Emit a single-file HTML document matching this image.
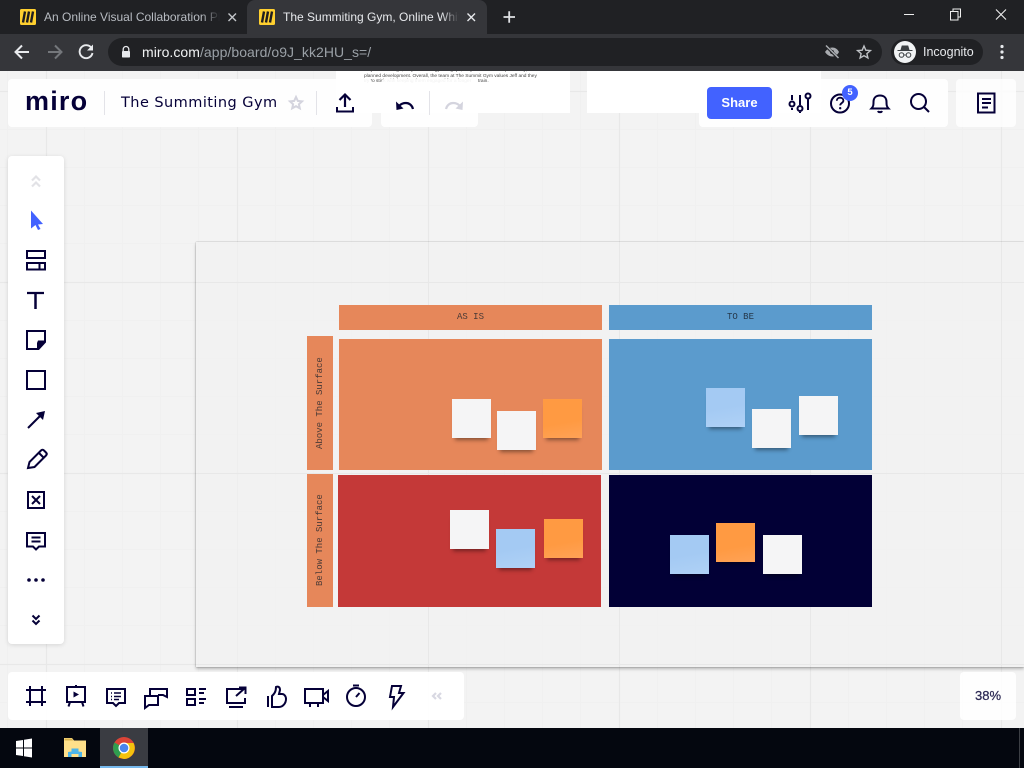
<!DOCTYPE html>
<html><head><meta charset="utf-8"><style>
html,body{margin:0;padding:0;width:1024px;height:768px;overflow:hidden;background:#f3f3f3;font-family:"Liberation Sans",sans-serif}
div,span,svg{position:absolute}
.p{background:rgba(255,255,255,.92);border-radius:4px}
.s{width:39px;height:39px;box-shadow:0 5px 4px -3px rgba(0,0,0,.42)}
.w{background:#f5f5f6}.o{background:linear-gradient(170deg,#ff9a42 60%,#ffa256)}.b{background:linear-gradient(170deg,#a4caf3 50%,#afd1f6)}
.m{font-family:"Liberation Mono",monospace;font-size:9px;color:#4a3a36;white-space:nowrap}
.v{writing-mode:vertical-rl;transform:rotate(180deg);text-align:center;line-height:26px}
.t{font-size:12px;line-height:16px;white-space:nowrap;overflow:hidden}
svg.i{overflow:visible;fill:none;stroke:#050038;stroke-width:2}
</style></head><body>

<!-- canvas grid -->
<svg style="left:0;top:71px" width="1024" height="657">
<g stroke="#f0f0f0" stroke-width="1">
<path d="M7.5 0V657M84.5 0V657M122.5 0V657M160.500 0V657M198.500 0V657M275.500 0V657M313.500 0V657M351.500 0V657M389.500 0V657M466.500 0V657M504.500 0V657M542.500 0V657M580.500 0V657M657.500 0V657M695.500 0V657M733.500 0V657M771.500 0V657M848.500 0V657M886.500 0V657M924.500 0V657M962.500 0V657"/>
<path d="M0 58.500H1024M0 96.500H1024M0 134.500H1024M0 172.500H1024M0 249.500H1024M0 287.500H1024M0 325.500H1024M0 363.500H1024M0 440.500H1024M0 478.500H1024M0 516.500H1024M0 554.500H1024M0 631.500H1024"/>
</g>
<g stroke="#e8e8e8" stroke-width="1.200">
<path d="M46.500 0V657M237.500 0V657M428.500 0V657M619.500 0V657M810.500 0V657M1001.500 0V657M0 20.500H1024M0 211.500H1024M0 402.500H1024M0 593.500H1024"/>
</g>
</svg>

<!-- frame -->
<div style="left:196px;top:242px;width:828px;height:425px;box-shadow:0 2px 3px rgba(0,0,0,.25),0 0 1px rgba(0,0,0,.4);background:rgba(242,242,242,.6)"></div>
<svg style="left:196px;top:242px" width="828" height="425"><g stroke="#e8e8e8"><path d="M232.500 0V425M423.500 0V425M614.500 0V425M805.500 0V425M0 40.500H828M0 231.500H828M0 422.500H828"/></g></svg>

<div style="left:339px;top:305px;width:263px;height:25px;background:#e6875a"></div>
<div style="left:609px;top:305px;width:263px;height:25px;background:#5b9bcd"></div>
<div class="m" style="left:339px;top:311px;width:263px;text-align:center;line-height:12px">AS IS</div>
<div class="m" style="left:609px;top:311px;width:263px;text-align:center;line-height:12px;color:#25394c">TO BE</div>
<div style="left:307px;top:336px;width:26px;height:134px;background:#e6875a"></div>
<div style="left:307px;top:474px;width:26px;height:133px;background:#e6875a"></div>
<div class="m v" style="left:307px;top:336px;width:26px;height:134px">Above The Surface</div>
<div class="m v" style="left:307px;top:474px;width:26px;height:133px">Below The Surface</div>
<div style="left:339px;top:339px;width:263px;height:131px;background:#e6875a"></div>
<div style="left:609px;top:339px;width:263px;height:131px;background:#5b9bcd"></div>
<div style="left:338px;top:475px;width:263px;height:131.5px;background:#c43938"></div>
<div style="left:609px;top:475px;width:263px;height:131.5px;background:#020036"></div>

<div class="s w" style="left:451.5px;top:399px"></div>
<div class="s w" style="left:497px;top:411px"></div>
<div class="s o" style="left:543px;top:398.5px"></div>
<div class="s w" style="left:450px;top:510px"></div>
<div class="s b" style="left:496px;top:529px"></div>
<div class="s o" style="left:544px;top:519px"></div>
<div class="s b" style="left:706px;top:388px"></div>
<div class="s w" style="left:752px;top:409px"></div>
<div class="s w" style="left:798.5px;top:395.5px"></div>
<div class="s b" style="left:670px;top:535px"></div>
<div class="s o" style="left:716px;top:523px"></div>
<div class="s w" style="left:762.5px;top:535px"></div>

<!-- white blocks under chrome -->
<div style="left:336px;top:71px;width:234px;height:42px;background:#fff;overflow:hidden">
<div style="left:28px;top:-3px;width:190px;font-size:4.8px;line-height:5.6px;color:#444;white-space:nowrap">they build change, they learn the gym at grips, they learn more responsibility, and<br>planned development. Overall, the team at The Summit Gym values Jeff and they<br>try to stick with keeping them engaged for a longer<span style="left:114px;top:11.2px">train.</span></div>
</div>
<div style="left:587px;top:71px;width:234px;height:42px;background:#fff"></div>

<!-- top panels -->
<div class="p" style="left:8px;top:79px;width:364px;height:48px"></div>
<div class="p" style="left:381px;top:79px;width:97px;height:48px"></div>
<div class="p" style="left:699px;top:79px;width:249px;height:48px"></div>
<div class="p" style="left:956px;top:79px;width:60px;height:48px;background:rgba(255,255,255,.8)"></div>
<div style="left:25px;top:86px;font-size:27px;line-height:31px;font-weight:bold;color:#050038;letter-spacing:1.2px;white-space:nowrap">miro</div>
<div style="left:121px;top:94px;font-family:'DejaVu Sans',sans-serif;font-size:14.5px;line-height:19px;color:#050038;letter-spacing:.45px;white-space:nowrap">The Summiting Gym</div>
<svg style="left:0;top:71px" width="1024" height="60">
<path d="M104.500 20V44M316.500 20V44M429.500 20V44" stroke="#e3e3e8"/>
<path d="M296 26l1.800 3.900 4.200.5-3.100 2.800.9 4.100-3.800-2.100-3.800 2.100.9-4.100-3.100-2.800 4.200-.5z" fill="none" stroke="#d4d4de" stroke-width="2"/>
<g fill="none" stroke="#050038"><path d="M345 36V24M339.500 29l5.500-5.500 5.500 5.500" stroke-width="2.200"/><path d="M337 36v4.500h16V36" stroke-width="2"/></g>
<path d="M413 38c-1-4-4-6-7-6-2.500 0-5 1-6.500 2.500" fill="none" stroke="#050038" stroke-width="2.200"/><path d="M396 30.500l.5 8.500 7-1.500z" fill="#050038"/>
<path d="M446 38c1-4 4-6 7-6 2.500 0 5 1 6.500 2.500" fill="none" stroke="#d4d4de" stroke-width="2.200"/><path d="M463 30.500l-.5 8.500-7-1.500z" fill="#d4d4de"/>
</svg>
<div style="left:707px;top:87px;width:65px;height:32px;background:#4262ff;border-radius:4px;color:#fff;font-weight:bold;font-size:13px;line-height:32px;text-align:center">Share</div>

<svg class="i" style="left:0;top:0" width="1024" height="768">
<path d="M792 95v5M792 108v2M800 95v10M800 113v-1M808 99v11" />
<circle cx="792" cy="104" r="2.500"/><circle cx="800" cy="108.500" r="2.500"/><circle cx="808" cy="96" r="2.500"/>
<circle cx="840" cy="103.500" r="9"/>
<path d="M836.800 100.800c0-4.200 6.600-4 6.600-.2 0 2.400-3.200 2.400-3.200 4.800" stroke-width="1.800"/><circle cx="840.200" cy="108.200" r=".6" stroke-width="1.200"/>
<path d="M871.500 108.500c2-2 2-4 2-6.500 0-4 2.500-6.500 6.500-6.500s6.500 2.500 6.500 6.500c0 2.500 0 4.500 2 6.500z"/><path d="M878 111c.5 1.500 3.500 1.500 4 0"/>
<circle cx="918.500" cy="101.500" r="7.500"/><path d="M924 107l5 5"/>
<path d="M978 93.500h16.500v19H978z"/><path d="M982 99h9M982 103h9M982 107.500h6"/>
</svg>
<div style="left:842px;top:85px;width:16px;height:16px;border-radius:50%;background:#4262ff;color:#fff;font-size:9.5px;font-weight:bold;line-height:16px;text-align:center">5</div>

<!-- left toolbar -->
<div class="p" style="left:8px;top:156px;width:56px;height:488px;background:#fff;box-shadow:0 1px 5px rgba(0,0,0,.12)"></div>
<!-- bottom toolbar -->
<div class="p" style="left:8px;top:672px;width:456px;height:48px;background:rgba(255,255,255,.95)"></div>
<div class="p" style="left:960px;top:672px;width:56px;height:48px;background:rgba(255,255,255,.85)"></div>
<div style="left:960px;top:672px;width:56px;height:48px;text-align:center;line-height:48px;font-size:13px;color:#2d2a55;-webkit-text-stroke:.25px #2d2a55">38%</div>

<svg class="i" style="left:0;top:0" width="1024" height="768">
<path d="M32 180.500l4-4 4 4M32 186.500l4-4 4 4" stroke="#e2e2e6" stroke-width="2.200"/>
<path d="M31 210.500L43 224l-5 .5 2.500 4.500-2.500 1-2.500-5-4.500 3.500z" fill="#4262ff" stroke="none"/>
<path d="M27 251h18v7H27zM27 263h18v6.500H27zM39.500 263v6.500"/>
<path d="M27 293h17" stroke-width="2.200"/><path d="M35.500 293v16" stroke-width="2.500"/>
<path d="M27 331h18v11l-6.500 7H27z"/><path d="M45 340.500v1.500l-7 7h-1v-6l1-2.500z" fill="#050038" stroke="none"/>
<path d="M27 371h18v18H27z"/>
<path d="M28 428l13-13" /><path d="M45 411l-9 2 7 7z" fill="#050038" stroke="none"/>
<path d="M28 468l1.500-6L41 450.500c1-1 2-1 3 0l2 2c1 1 1 2 0 3L34.500 467z"/><path d="M39 453l5 5"/>
<path d="M28 492h16v16H28z"/><path d="M32 496l8 8M40 496l-8 8" stroke-width="2"/>
<path d="M27 533h18v13.500h-6l-3 3-3-3h-6z"/><path d="M31.500 537.500h9M31.500 541.500h9" />
<circle cx="29" cy="580" r="1.800" fill="#050038" stroke="none"/><circle cx="36" cy="580" r="1.800" fill="#050038" stroke="none"/><circle cx="43" cy="580" r="1.800" fill="#050038" stroke="none"/>
<path d="M32.500 615.500l3.500 3.500 3.500-3.500M32.500 620.500l3.500 3.500 3.500-3.500"/>

<!-- bottom -->
<path d="M26 690h20M26 702h20M30 686v20M42 686v20"/>
<path d="M67 687h18v15H67zM70 702l-1.500 4.500M82 702l1.500 4.500"/><path d="M73.500 691.500l5.500 3-5.500 3z" fill="#050038" stroke="none"/><path d="M76 685v2"/>
<path d="M107 689h18v14h-6l-3 3-3-3h-6z"/><path d="M111 693h1M114 693h7M111 696.500h1M114 696.500h7M111 699.500h1M114 699.500h5" stroke-width="1.500"/>
<path d="M145 696h13v9h-9l-4 3zM150 696v-7h17v8l-4-2h-5"/>
<path d="M187 689h8v6h-8zM187 699h8v6h-8zM199 689h7M199 693h5M199 699h7M199 703h5"/>
<path d="M244 689h-17v14h18v-5M229 707h14M236 696l9-8M239 687.500h6.500V694"/>
<path d="M268 696v11M272 707v-11c2-2 4-4 4-9 2-1 4 0 4 3l-1 4h3c2 0 4 2 4 5 0 4-3 8-7 8z"/>
<path d="M305 689h18v14h-18zM323 695l5-4v10l-5-4M310 703v4M318 703v4"/>
<circle cx="356" cy="697" r="9"/><path d="M353 685.500h6M356 697l3.500-4"/>
<path d="M392 686h9l-2 7h4.500L393 707l1-10h-4z"/>
<path d="M436 693l-3 3 3 3M441 693l-3 3 3 3" stroke="#d8d8e2" stroke-width="2.200"/>
</svg>

<!-- taskbar -->
<div style="left:0;top:728px;width:1024px;height:40px;background:#04070f"></div>
<div style="left:100px;top:728px;width:48px;height:40px;background:#3a3c42"></div>
<div style="left:100px;top:766px;width:48px;height:2px;background:#76b9ed"></div>
<div style="left:1019px;top:728px;width:1px;height:40px;background:#3c3f45"></div>
<svg style="left:0;top:728px" width="160" height="40">
<path d="M16 13l7-1v7.500h-7zM24 11.800l8-1.300v9h-8zM16 20.500h7V28l-7-1zM24 20.500h8v9l-8-1.300z" fill="#fff"/>
<path d="M64 10h8l2 2.500h12V29H64z" fill="#ffe08a"/><path d="M64.500 10.500h7.500l1 2h-8.500z" fill="#d9b34e"/>
<path d="M68 29v-5l3.500-.5v-3h7v3l3.500.5v5h-3.500v-3h-7v3z" fill="#4db5e8"/>
<circle cx="124" cy="20" r="11" fill="#db4437"/>
<path d="M124 20L114.500 14.500A11 11 0 0 0 118.500 29.500z" fill="#2f9e4f"/>
<path d="M124 15h9.500A11 11 0 0 1 124 31l-5.500-1.500 5.500-9.500z" fill="#f4c20d"/>
<circle cx="124" cy="20" r="5.500" fill="#fff"/><circle cx="124" cy="20" r="4.300" fill="#4a85ed"/>
</svg>

<!-- browser chrome -->
<div style="left:0;top:0;width:1024px;height:34px;background:#202124"></div>
<div style="left:247px;top:0;width:240px;height:34px;background:#35363a;border-radius:8px 8px 0 0"></div>
<div style="left:0;top:34px;width:1024px;height:37px;background:#35363a"></div>
<div style="left:108px;top:38px;width:774px;height:28px;background:#202124;border-radius:14px"></div>
<div style="left:891px;top:39px;width:92px;height:26px;border-radius:13px;background:#202124"></div>
<div class="t" style="left:44px;top:9px;width:176px;color:#b8bcc2;-webkit-mask-image:linear-gradient(90deg,#000 90%,transparent)">An Online Visual Collaboration Pl</div>
<div class="t" style="left:283px;top:9px;width:176px;color:#e8eaed;-webkit-mask-image:linear-gradient(90deg,#000 90%,transparent)">The Summiting Gym, Online Whit</div>
<div style="left:142px;top:44px;font-size:14px;line-height:17px;white-space:nowrap;color:#9aa0a6;letter-spacing:.05px"><span style="position:static;color:#f1f3f4">miro.com</span>/app/board/o9J_kk2HU_s=/</div>
<div style="left:923px;top:44px;font-size:12.5px;line-height:16px;color:#e8eaed;white-space:nowrap">Incognito</div>
<svg style="left:0;top:0" width="1024" height="71">
<rect x="20" y="9" width="16" height="16" rx="1.500" fill="#ffd02f"/><path d="M25 11.500l-2 11M29 11.500l-2 11M33 11.500l-2 11" stroke="#1f1d20" stroke-width="2.400" fill="none"/>
<rect x="259" y="9" width="16" height="16" rx="1.500" fill="#ffd02f"/><path d="M264 11.500l-2 11M268 11.500l-2 11M272 11.500l-2 11" stroke="#1f1d20" stroke-width="2.400" fill="none"/>
<g fill="none" stroke-width="1.400"><path d="M228.500 13.500l7.500 7.500M236 13.500l-7.500 7.500" stroke="#c4c7cb"/><path d="M467.500 13.500l7.500 7.500M475 13.500l-7.500 7.500" stroke="#e8eaed"/></g>
<path d="M503.500 17h11.500M509.200 11.300v11.500" stroke="#e0e2e5" stroke-width="1.800" fill="none"/>
<path d="M904 14.500h10" stroke="#eee" stroke-width="1" fill="none"/>
<path d="M950.500 11.500h7.500v8.500h-7.500zM953 11.500V9h7.500v8h-2.500" stroke="#eee" stroke-width="1" fill="none"/>
<path d="M996 9.500l10 10M1006 9.500l-10 10" stroke="#eee" stroke-width="1.100" fill="none"/>
<path d="M29 52H16M22 45.500L15.500 52 22 58.500" stroke="#e8eaed" stroke-width="2" fill="none"/>
<path d="M48 52h13M55 45.500l6.500 6.500-6.500 6.500" stroke="#74777b" stroke-width="2" fill="none"/>
<path d="M91.500 48a6.500 6.500 0 1 0 1 5" stroke="#e8eaed" stroke-width="1.900" fill="none"/><path d="M93 44.500v6h-6z" fill="#e8eaed"/>
<path d="M123.200 51.500v-2.200a2.800 2.800 0 0 1 5.600 0v2.200" stroke="#e8eaed" stroke-width="1.300" fill="none"/><rect x="122" y="51" width="8" height="6.500" rx=".8" fill="#e8eaed"/>
<path d="M825 52c4-6 11-6 14 0-3 6-10 6-14 0z" fill="#a8abaf"/><circle cx="832" cy="52" r="2" fill="#202124"/><path d="M826 46l12 12" stroke="#202124" stroke-width="3"/><path d="M826 45.500l12.500 12.500" stroke="#a8abaf" stroke-width="1.500"/>
<path d="M864 46l1.800 4.200 4.600.4-3.500 3 1 4.400-3.900-2.300-3.900 2.300 1-4.400-3.500-3 4.600-.4z" fill="none" stroke="#bfc2c6" stroke-width="1.400"/>
<circle cx="905" cy="52" r="11" fill="#f1f3f4"/><path d="M900.500 50l1.300-4.500h6.400l1.300 4.500zM897.500 50h15v1h-15z" fill="#3c4043"/><circle cx="901.500" cy="55" r="2.300" fill="none" stroke="#3c4043"/><circle cx="908.500" cy="55" r="2.300" fill="none" stroke="#3c4043"/><path d="M903.800 55h2.400" stroke="#3c4043"/>
<circle cx="1002" cy="46.500" r="1.600" fill="#e8eaed"/><circle cx="1002" cy="52" r="1.600" fill="#e8eaed"/><circle cx="1002" cy="57.500" r="1.600" fill="#e8eaed"/>
</svg>
</body></html>
